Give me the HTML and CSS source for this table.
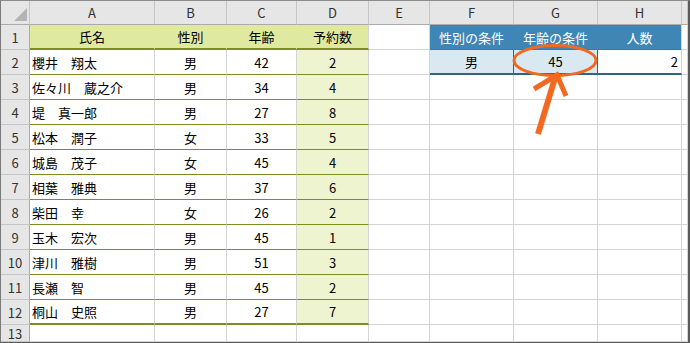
FILE: index.html
```html
<!DOCTYPE html>
<html lang="ja">
<head>
<meta charset="utf-8">
<link rel="stylesheet" href="styles.css">
</head>
<body>
<div class="frame">
  <div class="sheet">
    <div class="c hd corner"><span class="tri"></span></div>
    <div class="c hd">A</div><div class="c hd">B</div><div class="c hd">C</div><div class="c hd">D</div><div class="c hd">E</div><div class="c hd">F</div><div class="c hd">G</div><div class="c hd">H</div><div class="c hd"></div>

    <div class="c rh">1</div>
    <div class="c th">氏名</div><div class="c th">性別</div><div class="c th">年齢</div><div class="c th thl">予約数</div>
    <div class="c"></div>
    <div class="c bh">性別の条件</div><div class="c bh">年齢の条件</div><div class="c bh bhl">人数</div><div class="c"></div>

    <div class="c rh">2</div>
    <div class="c td name">櫻井　翔太</div><div class="c td">男</div><div class="c td">42</div><div class="c td dd">2</div>
    <div class="c"></div>
    <div class="c bd lb">男</div><div class="c bd lb">45</div><div class="c bd num">2</div><div class="c"></div>

    <div class="c rh">3</div>
    <div class="c td name">佐々川　蔵之介</div><div class="c td">男</div><div class="c td">34</div><div class="c td dd">4</div>
    <div class="c"></div><div class="c"></div><div class="c"></div><div class="c"></div><div class="c"></div>

    <div class="c rh">4</div>
    <div class="c td name">堤　真一郎</div><div class="c td">男</div><div class="c td">27</div><div class="c td dd">8</div>
    <div class="c"></div><div class="c"></div><div class="c"></div><div class="c"></div><div class="c"></div>

    <div class="c rh">5</div>
    <div class="c td name">松本　潤子</div><div class="c td">女</div><div class="c td">33</div><div class="c td dd">5</div>
    <div class="c"></div><div class="c"></div><div class="c"></div><div class="c"></div><div class="c"></div>

    <div class="c rh">6</div>
    <div class="c td name">城島　茂子</div><div class="c td">女</div><div class="c td">45</div><div class="c td dd">4</div>
    <div class="c"></div><div class="c"></div><div class="c"></div><div class="c"></div><div class="c"></div>

    <div class="c rh">7</div>
    <div class="c td name">相葉　雅典</div><div class="c td">男</div><div class="c td">37</div><div class="c td dd">6</div>
    <div class="c"></div><div class="c"></div><div class="c"></div><div class="c"></div><div class="c"></div>

    <div class="c rh">8</div>
    <div class="c td name">柴田　幸</div><div class="c td">女</div><div class="c td">26</div><div class="c td dd">2</div>
    <div class="c"></div><div class="c"></div><div class="c"></div><div class="c"></div><div class="c"></div>

    <div class="c rh">9</div>
    <div class="c td name">玉木　宏次</div><div class="c td">男</div><div class="c td">45</div><div class="c td dd">1</div>
    <div class="c"></div><div class="c"></div><div class="c"></div><div class="c"></div><div class="c"></div>

    <div class="c rh">10</div>
    <div class="c td name">津川　雅樹</div><div class="c td">男</div><div class="c td">51</div><div class="c td dd">3</div>
    <div class="c"></div><div class="c"></div><div class="c"></div><div class="c"></div><div class="c"></div>

    <div class="c rh">11</div>
    <div class="c td name">長瀬　智</div><div class="c td">男</div><div class="c td">45</div><div class="c td dd">2</div>
    <div class="c"></div><div class="c"></div><div class="c"></div><div class="c"></div><div class="c"></div>

    <div class="c rh">12</div>
    <div class="c td last name">桐山　史照</div><div class="c td last">男</div><div class="c td last">27</div><div class="c td last dd">7</div>
    <div class="c"></div><div class="c"></div><div class="c"></div><div class="c"></div><div class="c"></div>

    <div class="c rh">13</div>
    <div class="c"></div><div class="c"></div><div class="c"></div><div class="c"></div><div class="c"></div><div class="c"></div><div class="c"></div><div class="c"></div><div class="c"></div>
  </div>
  <svg class="mark" width="690" height="343" viewBox="0 0 690 343">
    <ellipse cx="555" cy="60.5" rx="41" ry="15" fill="none" stroke="#f26a22" stroke-width="3"/>
    <line x1="538" y1="134" x2="555" y2="78" stroke="#f26a22" stroke-width="6"/>
    <polyline points="534,89 557,75 566,96" fill="none" stroke="#f26a22" stroke-width="5" stroke-linejoin="miter"/>
  </svg>
</div>
</body>
</html>
```
FILE: styles.css
```css
* { box-sizing: border-box; margin: 0; padding: 0; }
body { margin: 0; background: #fff; font-family: "Noto Sans CJK JP", "Noto Sans", sans-serif; }
.frame {
  position: relative;
  width: 690px;
  height: 343px;
  border-top: 1px solid #8c8c8c;
  border-left: 1px solid #7a7a7a;
  border-right: 2px solid #5a5a5a;
  border-bottom: 1px solid #5a5a5a;
}
.sheet {
  display: grid;
  grid-template-columns: 29px 125px 72px 70px 72px 61px 84px 84px 84px 6px;
  grid-template-rows: 24px repeat(12, 25px) 17px;
}
.c {
  border-right: 1px solid #d4d4d4;
  border-bottom: 1px solid #d4d4d4;
  font-size: 13px;
  line-height: 1;
  color: #000;
  display: flex;
  align-items: center;
  justify-content: center;
  white-space: nowrap;
  overflow: hidden;
}
.hd { background: #e6e6e6; color: #333; border-right-color: #c6c6c6; border-bottom-color: #ababab; }
.rh { background: #e6e6e6; color: #333; border-right-color: #ababab; border-bottom-color: #c6c6c6; }
.corner { justify-content: flex-end; align-items: flex-end; padding: 0 2px 3px 0; }
.tri { width: 0; height: 0; border-left: 13px solid transparent; border-bottom: 13px solid #b4b4b4; }
.th { background: #dfe9a0; border-right-color: #dfe9a0; border-bottom: 2px solid #7f8d1e; }
.th.thl { border-right-color: #d4d4d4; }
.td { border-bottom-color: #7f8d1e; }
.td.last { border-bottom-width: 2px; }
.dd { background: #eff4d0; }
.name { justify-content: flex-start; padding-left: 2px; }
.bh { background: #3f86b5; color: #fff; border-right-color: #3f86b5; border-bottom-color: #3a7aa5; }
.bh.bhl { border-right-color: #d4d4d4; }
.bd { border-bottom: 2px solid #2f6482; }
.lb { background: #d9e8f1; border-right-color: #2f6482; }
.num { justify-content: flex-end; padding-right: 3px; }
.mark { position: absolute; top: -1px; left: -1px; pointer-events: none; }
```
